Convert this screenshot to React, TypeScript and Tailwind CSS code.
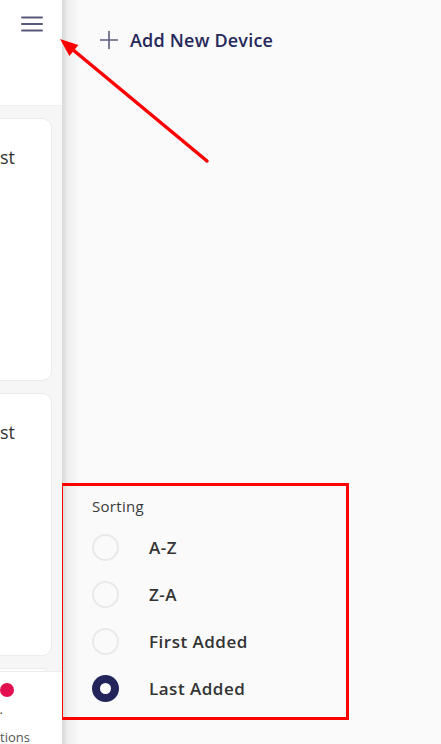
import { useState } from "react";

const sortOptions = ["A-Z", "Z-A", "First Added", "Last Added"];

const Hamburger = () => (
  <svg width="22" height="16" viewBox="0 0 22 16" fill="none">
    <path d="M1 1.5h20M1 8h20M1 14.5h20" stroke="#585a7c" strokeWidth="2" strokeLinecap="round" />
  </svg>
);

const Plus = () => (
  <svg width="18" height="18" viewBox="0 0 18 18" fill="none">
    <path d="M9 0v18M0 9h18" stroke="#5d5f7d" strokeWidth="1.6" />
  </svg>
);

const DeviceCard = () => (
  <div className="w-[280px] h-[263px] shrink-0 bg-white rounded-[10px] border border-[#ebebeb] flex justify-end pr-[36px] pt-[26px]">
    <span className="text-[18px] leading-6 text-[#333]">Gateway Test</span>
  </div>
);

const Sidebar = () => {
  return (
    <div className="relative z-10 w-[62px] h-screen shrink-0 flex flex-col bg-white overflow-hidden">
      <div className="h-[105px] shrink-0 flex justify-end pr-[19px] pt-[16px]">
        <Hamburger />
      </div>
      <div className="flex-1 min-h-0 bg-[#f6f6f6] border-t border-[#f0f0f0] flex flex-col items-end gap-3 pt-3 pr-[10px] overflow-hidden">
        <DeviceCard />
        <DeviceCard />
        <DeviceCard />
      </div>
      <div className="h-[73px] shrink-0 bg-white border-t border-[#ececec] flex flex-col items-end overflow-hidden">
        <div className="shrink-0 mt-[11px] mr-[48px] w-[14px] h-[14px] rounded-full bg-[#e2104e]" />
        <span className="shrink-0 mt-[3px] mr-[59px] text-[13px] leading-[18px] text-[#444]">.</span>
        <span className="shrink-0 mr-[32px] mt-[10px] text-[13px] leading-[18px] text-[#555] whitespace-nowrap">Notifications</span>
      </div>
    </div>
  );
};

const Drawer = () => {
  const [sort, setSort] = useState("Last Added");
  return (
    <div className="flex-1 h-screen flex flex-col pb-6 bg-[linear-gradient(to_right,#d8d8d8,#efefef_6px,#fafafa_18px)]">
      <button className="flex items-center gap-3 h-10 mt-5 pl-[38px] text-left">
        <Plus />
        <span className="text-[18px] font-semibold text-[#26285a] tracking-[0.2px]">Add New Device</span>
      </button>
      <div className="mt-auto -ml-[2px] w-[289px] border-[3px] border-[#ff0000] pl-[29px] pt-[10px] pb-[5px]">
        <div className="h-5 text-[15px] leading-5 tracking-[0.3px] text-[#3a3a3a]">Sorting</div>
        <div className="mt-2 flex flex-col">
          {sortOptions.map((opt) => (
            <label key={opt} className="h-[47px] flex items-center gap-[30px] cursor-pointer" onClick={() => setSort(opt)}>
              {sort === opt ? (
                <span className="w-[27px] h-[27px] rounded-full bg-[#23255a] flex items-center justify-center">
                  <span className="w-[11px] h-[11px] rounded-full bg-white" />
                </span>
              ) : (
                <span className="w-[27px] h-[27px] rounded-full border-2 border-[#e9e9e9] bg-[#fafafa]" />
              )}
              <span className="text-[17px] font-semibold tracking-[0.5px] text-[#333]">{opt}</span>
            </label>
          ))}
        </div>
      </div>
    </div>
  );
};

export default function App() {
  return (
    <div className="relative w-full h-screen flex overflow-hidden font-['Open_Sans',sans-serif]">
      <Sidebar />
      <Drawer />
      <svg className="absolute inset-0 z-20 pointer-events-none" width="441" height="744" viewBox="0 0 441 744">
        <line x1="207" y1="161" x2="72" y2="49" stroke="#ff0000" strokeWidth="3.5" strokeLinecap="round" />
        <polygon points="60,39 78.4,45.1 69.4,55.9" fill="#ff0000" />
      </svg>
    </div>
  );
}
